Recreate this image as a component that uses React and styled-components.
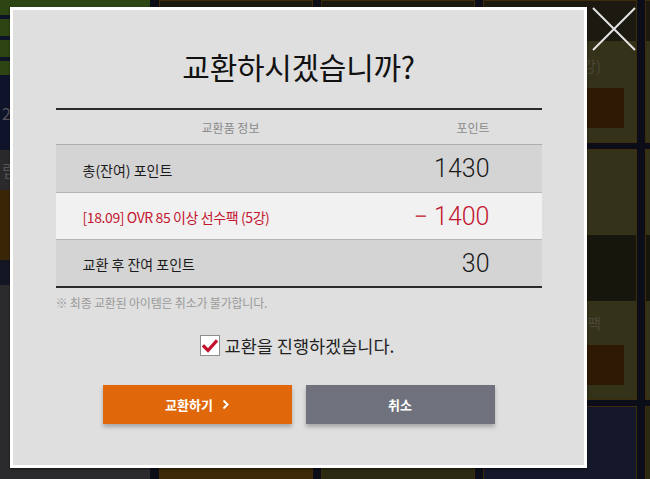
import React from 'react';
import styled, { createGlobalStyle } from 'styled-components';

const GlobalStyle = createGlobalStyle`
  html, body {
    margin: 0;
    padding: 0;
    background: #0b0d19;
  }
  body {
    font-family: "Noto Sans CJK KR", "Noto Sans", sans-serif;
  }
  * {
    box-sizing: border-box;
  }
`;

const rows = [
  { label: '총(잔여) 포인트', value: '1430', tone: 'base' },
  { label: '[18.09] OVR 85 이상 선수팩 (5강)', value: '− 1400', tone: 'used' },
  { label: '교환 후 잔여 포인트', value: '30', tone: 'base' },
];

// only the cards of the right-hand column peek out from behind the modal
const cards = [
  { caption: '', image: '#1c1a10', offset: 0, size: 40 },
  { caption: '', image: '#1c1a10', offset: 0, size: 40 },
  { caption: '(5강)', image: '#1c1a10', offset: 0, size: 40 },
  { caption: '', image: '#1c1a10', offset: 0, size: 40 },
  { caption: '', image: '#17160c', offset: 85, size: 66 },
  { caption: '', image: '#17160c', offset: 85, size: 66 },
  { caption: '선수팩', image: '#17160c', offset: 85, size: 66 },
  { caption: '', image: '#17160c', offset: 85, size: 66 },
  { caption: '', image: '#3a2806', offset: 0, size: 80 },
  { caption: '', image: '#2c2a12', offset: 0, size: 80 },
  { caption: '', image: '#14182a', offset: 0, size: 80 },
  { caption: '', image: '#2c2a12', offset: 0, size: 80 },
];

const App = () => {
  return (
    <>
      <GlobalStyle />
      <Stage>
        <Sidebar>
          <Banner>
            <Stripe />
            <Stripe />
            <Stripe />
          </Banner>
          <SideBlock $h={75} $bg="#10142a">
            <SideText>25</SideText>
          </SideBlock>
          <SideBlock $h={40} $bg="#2a2a2c">
            <SideText>립</SideText>
          </SideBlock>
          <SideBlock $h={70} $bg="#3a2607" />
          <SideBlock $h={25} $bg="#141624" />
          <SideFill>
            <SideBig>k</SideBig>
            <SideFoot>
              (잔여) 포인트 <InfoDot>!</InfoDot>
            </SideFoot>
          </SideFill>
        </Sidebar>

        <ShopGrid>
          {cards.map((card, i) => (
            <Card key={i}>
              <CardImage $bg={card.image} $offset={card.offset} $size={card.size} />
              <CardCaption>{card.caption}</CardCaption>
              <CardButton />
            </Card>
          ))}
        </ShopGrid>

        <Modal>
          <Title>교환하시겠습니까?</Title>

          <Table>
            <HeadRow>
              <HeadLabel>교환품 정보</HeadLabel>
              <HeadValue>포인트</HeadValue>
            </HeadRow>
            {rows.map((row) => (
              <Row key={row.label} $tone={row.tone}>
                <RowLabel $tone={row.tone}>{row.label}</RowLabel>
                <RowValue $tone={row.tone}>{row.value}</RowValue>
              </Row>
            ))}
          </Table>

          <Note>※ 최종 교환된 아이템은 취소가 불가합니다.</Note>

          <Agree>
            <CheckBox>
              <svg width="16" height="14" viewBox="0 0 16 14">
                <path d="M2 7.5 L6 11.5 L14 2.5" fill="none" stroke="#c2102d" strokeWidth="3.2" strokeLinecap="square" />
              </svg>
            </CheckBox>
            <AgreeText>교환을 진행하겠습니다.</AgreeText>
          </Agree>

          <Actions>
            <ActionButton $variant="primary">
              교환하기
              <svg width="7" height="11" viewBox="0 0 7 11">
                <path d="M1.5 1.5 L5.5 5.5 L1.5 9.5" fill="none" stroke="#fff" strokeWidth="2" />
              </svg>
            </ActionButton>
            <ActionButton $variant="cancel">취소</ActionButton>
          </Actions>
        </Modal>

        <CloseButton aria-label="close">
          <svg width="44" height="44" viewBox="0 0 44 44">
            <path d="M1 1 L43 43 M43 1 L1 43" stroke="#e4e4e4" strokeWidth="2" />
          </svg>
        </CloseButton>
      </Stage>
    </>
  );
};

export default App;

const Stage = styled.div`
  position: relative;
  width: 650px;
  height: 479px;
  overflow: hidden;
  display: grid;
  grid-template-columns: 150px 1fr;
  background: #0b0d19;
`;

/* background shop (dimmed) */

const Sidebar = styled.div`
  display: flex;
  flex-direction: column;
  background: #222226;
`;

const Banner = styled.div`
  height: 75px;
  background: #2c4512;
  display: flex;
  flex-direction: column;
  justify-content: space-around;
  padding: 6px 0;
`;

const Stripe = styled.div`
  height: 4px;
  background: #101428;
`;

const SideBlock = styled.div`
  height: ${(p) => p.$h}px;
  background: ${(p) => p.$bg};
  display: flex;
  align-items: center;
`;

const SideText = styled.span`
  color: #55555a;
  font-size: 16px;
  padding-left: 2px;
`;

const SideFill = styled.div`
  flex: 1;
  background: #2b2b2d;
  display: flex;
  flex-direction: column;
  justify-content: space-between;
  padding: 90px 0 0 8px;
`;

const SideBig = styled.span`
  color: #111;
  font-size: 34px;
  font-weight: 700;
`;

const SideFoot = styled.span`
  color: #151515;
  font-size: 14px;
  font-weight: 700;
  display: flex;
  align-items: center;
  gap: 6px;
  margin-left: -4px;
  margin-bottom: -6px;
`;

const InfoDot = styled.span`
  width: 14px;
  height: 14px;
  border-radius: 50%;
  background: #0c1a5a;
  color: #1b2b80;
  font-size: 10px;
  text-align: center;
  line-height: 14px;
`;

const ShopGrid = styled.div`
  display: grid;
  grid-template-columns: repeat(4, 154px);
  grid-template-rows: 143px 251px 1fr;
  column-gap: 8px;
  row-gap: 6px;
  padding-left: 9px;
`;

const Card = styled.div`
  background: #35321a;
  border: 1px solid #3d2b0c;
  display: flex;
  flex-direction: column;
  padding: 0 12px 14px 6px;
`;

const CardImage = styled.div`
  height: ${(p) => p.$size}px;
  margin: ${(p) => p.$offset}px -12px 0 -6px;
  background: ${(p) => p.$bg};
`;

const CardCaption = styled.div`
  flex: 1;
  display: flex;
  align-items: flex-end;
  justify-content: flex-end;
  color: #4a4738;
  font-size: 15px;
  padding: 0 23px 12px 0;
  white-space: nowrap;
`;

const CardButton = styled.div`
  height: 40px;
  background: #2f1804;
`;

/* modal */

const Modal = styled.div`
  position: absolute;
  left: 10px;
  top: 7px;
  width: 577px;
  height: 461px;
  background: #dfdfdf;
  border: 3px solid #fff;
  box-shadow: 0 1px 2px rgba(0, 0, 0, 0.5);
  display: flex;
  flex-direction: column;
  align-items: center;
  padding-top: 38px;
`;

const Title = styled.h1`
  margin: 0;
  font-size: 30px;
  line-height: 36px;
  font-weight: 400;
  color: #111;
  letter-spacing: -0.3px;
`;

const Table = styled.div`
  width: 486px;
  margin-top: 24px;
  border-top: 2px solid #2a2a2a;
  border-bottom: 2px solid #2a2a2a;
`;

const HeadRow = styled.div`
  display: grid;
  grid-template-columns: 348px 1fr;
  height: 35px;
  align-items: center;
  border-bottom: 1px solid #aeaeae;
`;

const HeadLabel = styled.span`
  text-align: center;
  font-size: 12px;
  color: #8a8a8a;
  padding-left: 2px;
`;

const HeadValue = styled.span`
  text-align: right;
  font-size: 12px;
  color: #8a8a8a;
  padding-right: 52px;
`;

const Row = styled.div`
  display: grid;
  grid-template-columns: 1fr auto;
  align-items: center;
  height: 47px;
  padding: 0 52px 0 27px;
  background: ${(p) => (p.$tone === 'used' ? '#f1f1f1' : '#d4d4d4')};
  & + & {
    border-top: 1px solid #b6b6b6;
  }
`;

const RowLabel = styled.span`
  font-size: 14px;
  color: ${(p) => (p.$tone === 'used' ? '#c3162f' : '#1a1a1a')};
  letter-spacing: ${(p) => (p.$tone === 'used' ? '-0.4px' : '0')};
  padding-top: 2px;
`;

const RowValue = styled.span`
  font-family: Roboto, "Liberation Sans", sans-serif;
  font-weight: 300;
  font-size: 25px;
  color: ${(p) => (p.$tone === 'used' ? '#c3162f' : '#1a1a1a')};
`;

const Note = styled.p`
  width: 486px;
  margin: 7px 0 0;
  font-size: 12px;
  line-height: 16px;
  color: #9a9a9a;
  letter-spacing: -0.2px;
`;

const Agree = styled.label`
  display: flex;
  align-items: center;
  gap: 5px;
  margin-top: 22px;
  margin-left: -3px;
`;

const CheckBox = styled.span`
  width: 20px;
  height: 21px;
  background: #fff;
  border: 1px solid #8d8d8d;
  display: flex;
  align-items: center;
  justify-content: center;
`;

const AgreeText = styled.span`
  font-size: 17.5px;
  color: #222;
`;

const Actions = styled.div`
  display: flex;
  gap: 14px;
  margin-top: 27px;
`;

const ActionButton = styled.button`
  width: 189px;
  height: 39px;
  border: none;
  background: ${(p) => (p.$variant === 'primary' ? '#e0680a' : '#6f727c')};
  color: #fff;
  font-family: "Noto Sans CJK KR", sans-serif;
  font-size: 13px;
  font-weight: 700;
  display: flex;
  align-items: center;
  justify-content: center;
  gap: 9px;
  box-shadow: 0 3px 4px rgba(0, 0, 0, 0.25);
  cursor: pointer;
`;

const CloseButton = styled.button`
  position: absolute;
  left: 592px;
  top: 7px;
  width: 44px;
  height: 44px;
  padding: 0;
  border: none;
  background: transparent;
  display: flex;
  cursor: pointer;
`;
